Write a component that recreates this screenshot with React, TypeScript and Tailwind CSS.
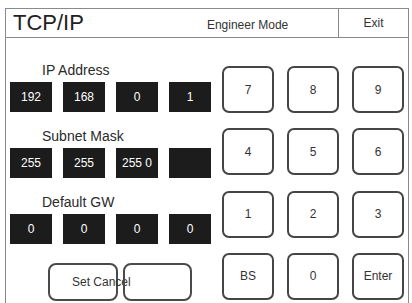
import React from 'react'

const FONT = { fontFamily: '"Liberation Sans", Arial, sans-serif' }

const FIELDS: Array<{ label: string; values: string[] }> = [
  { label: 'IP Address', values: ['192', '168', '0', '1'] },
  { label: 'Subnet Mask', values: ['255', '255', '255 0', ''] },
  { label: 'Default GW', values: ['0', '0', '0', '0'] },
]

const KEYS = ['7', '8', '9', '4', '5', '6', '1', '2', '3', 'BS', '0', 'Enter']

function OctetBox({ value }: { value: string }) {
  return (
    <div className="w-[42px] h-[30px] bg-[#1c1c1c] text-white text-[12px] flex items-center justify-center whitespace-nowrap">
      {value}
    </div>
  )
}

export default function App() {
  return (
    <div className="w-[412px] h-[303px] bg-white overflow-hidden text-[#2a2a2a]" style={FONT}>
      <div className="ml-[5px] mt-[8px] w-[404px] h-[310px] border border-[#8a8a8a]">
        {/* header */}
        <div className="flex h-[29px] border-b border-[#8a8a8a]">
          <div className="flex-1 flex items-center">
            <span className="pl-[7px] text-[22px] leading-none text-[#222]">TCP/IP</span>
            <span className="ml-[123px] mt-[3px] text-[12px] text-[#333]">Engineer Mode</span>
          </div>
          <div className="w-[70px] border-l border-[#8a8a8a] flex items-center justify-center text-[12px] text-[#333]">
            Exit
          </div>
        </div>

        {/* body */}
        <div className="flex">
          <div className="w-[216px] pl-[4px] pt-[25px] flex flex-col">
            {FIELDS.map((f, i) => (
              <div key={f.label} className={i === 0 ? '' : 'mt-[17px]'}>
                <div className="pl-[32px] h-[14px] leading-[14px] text-[14px] text-[#2a2a2a]">{f.label}</div>
                <div className="mt-[5px] flex gap-[11px]">
                  {f.values.map((v, j) => (
                    <OctetBox key={j} value={v} />
                  ))}
                </div>
              </div>
            ))}
            <div className="mt-[19px] ml-[38px] flex gap-[5px]">
              <button className="w-[70px] h-[38px] rounded-[8px] border-2 border-[#4a4a4a] flex items-center pl-[22px] whitespace-nowrap text-[12px] text-[#333]">
                Set Cancel
              </button>
              <button className="w-[69px] h-[38px] rounded-[8px] border-2 border-[#4a4a4a]" />
            </div>
          </div>

          {/* keypad */}
          <div className="pt-[28px] grid grid-cols-[52px_52px_52px] gap-x-[13px] gap-y-[14px]">
            {KEYS.map(k => (
              <button
                key={k}
                className="h-[47px] rounded-[7px] border-2 border-[#454545] flex items-center justify-center text-[12px] text-[#333]"
              >
                {k}
              </button>
            ))}
          </div>
        </div>
      </div>
    </div>
  )
}
